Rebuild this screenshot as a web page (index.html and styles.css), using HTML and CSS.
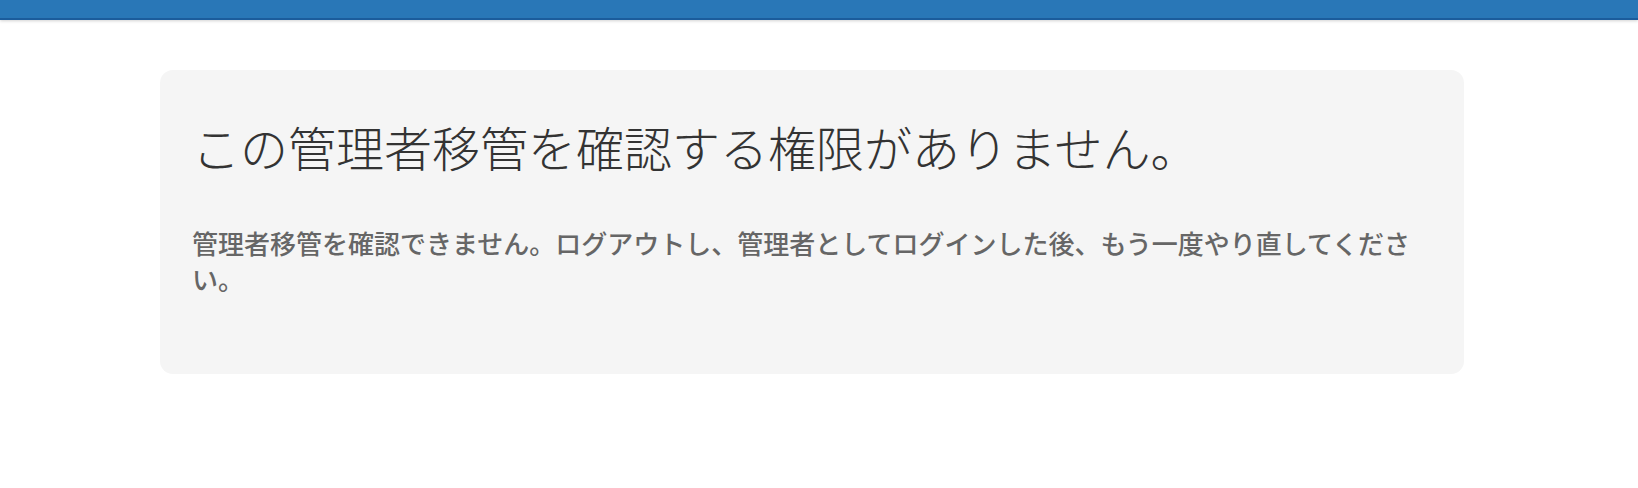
FILE: index.html
```html
<!DOCTYPE html>
<html lang="ja">
<head>
  <meta charset="UTF-8" />
  <meta name="viewport" content="width=device-width, initial-scale=1" />
  <title>管理者移管</title>
  <link rel="stylesheet" href="styles.css">
</head>
<body>
  <header class="topbar"></header>

  <main class="page">
    <!-- Error card -->
    <section class="notice">
      <h1 class="notice-title">この管理者移管を確認する権限がありません。</h1>
      <p class="notice-text">管理者移管を確認できません。ログアウトし、管理者としてログインした後、もう一度やり直してください。</p>
    </section>
  </main>
</body>
</html>
```

FILE: styles.css
```css
body {
  margin: 0;
  font-family: "Noto Sans CJK JP", "Noto Sans", sans-serif;
  background: #fff;
  color: #333;
}

.topbar {
  height: 18px;
  background: #2977b7;
  border-bottom: 2px solid #1b5c9c;
  box-shadow: 0 1px 3px rgba(0, 0, 0, 0.18);
}

.page {
  padding: 50px 0 40px 160px;
}

.notice {
  box-sizing: border-box;
  width: 1304px;
  min-height: 304px;
  padding: 48px 32px 40px;
  background: #f5f5f5;
  border-radius: 13px;
}

.notice-title {
  margin: 0 0 49px;
  font-size: 48px;
  font-weight: 300;
  line-height: 1.2;
  color: #333;
}

.notice-text {
  margin: 0;
  font-size: 26px;
  font-weight: 500;
  line-height: 1.4;
  color: #666;
}
```
